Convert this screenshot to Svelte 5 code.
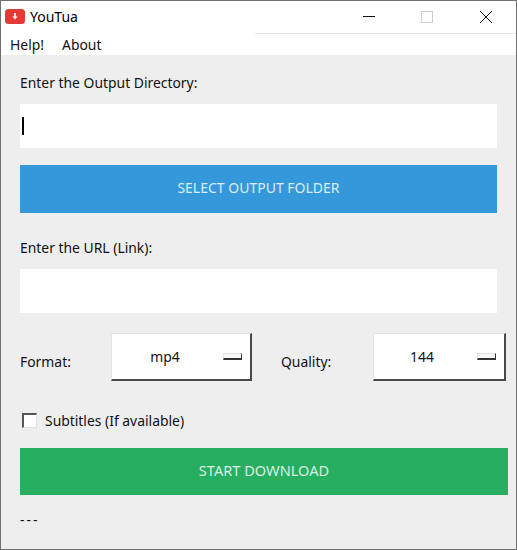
<script lang="ts">
    let outputDir = '';
    let url = '';
    let format = 'mp4';
    let quality = '144';
</script>

<main class="window">
    <header class="titlebar">
        <svg class="app-icon" width="20" height="15" viewBox="0 0 20 15">
            <rect width="20" height="15" rx="3.500" fill="#e53935" />
            <path d="M9 4h2v3.500h1.800L10 10.500 7.200 7.500H9z" fill="#fbe9e7" />
        </svg>
        <span class="app-title">YouTua</span>
        <div class="win-controls">
            <svg width="14" height="14" viewBox="0 0 14 14"><path d="M2 6.500h12" stroke="#111" fill="none" /></svg>
            <svg width="14" height="14" viewBox="0 0 14 14"><rect x="1.500" y="1.500" width="11" height="11" stroke="#ccc" fill="none" /></svg>
            <svg width="14" height="14" viewBox="0 0 14 14"><path d="M1 1l12 12M13 1L1 13" stroke="#111" fill="none" /></svg>
        </div>
    </header>

    <nav class="menubar">
        <span>Help!</span>
        <span>About</span>
    </nav>

    <section class="content">
        <div class="label first">Enter the Output Directory:</div>
        <div class="entry"><span class="caret"></span>{outputDir}</div>
        <button class="btn blue">SELECT OUTPUT FOLDER</button>

        <div class="label second">Enter the URL (Link):</div>
        <div class="entry">{url}</div>

        <div class="options">
            <span class="opt-label format">Format:</span>
            <div class="optionmenu format-menu">
                <span>{format}</span>
                <i class="indicator"></i>
            </div>
            <span class="opt-label quality">Quality:</span>
            <div class="optionmenu quality-menu">
                <span>{quality}</span>
                <i class="indicator"></i>
            </div>
        </div>

        <label class="check">
            <span class="box"></span>
            Subtitles (If available)
        </label>

        <button class="btn green">START DOWNLOAD</button>
        <div class="status">---</div>
    </section>
</main>

<style>
    :global(body) {
        margin: 0;
        background: #eeeeee;
    }

    .window {
        box-sizing: border-box;
        width: 517px;
        height: 550px;
        display: flex;
        flex-direction: column;
        border: 1px solid #707070;
        font-family: "Noto Sans", "Open Sans", sans-serif;
        font-size: 13.9px;
        color: #111;
        background: #eeeeee;
        overflow: hidden;
    }

    .titlebar {
        height: 32px;
        display: flex;
        align-items: center;
        background: #fff;
        padding-left: 4px;
        padding-bottom: 2px;
        box-sizing: border-box;
        flex: none;
    }

    .app-icon {
        margin-right: 5px;
    }

    .app-title {
        font-size: 14px;
        color: #000;
    }

    .win-controls {
        margin-left: auto;
        display: flex;
        gap: 45px;
        padding-top: 2px;
        padding-right: 23px;
    }

    .win-controls svg {
        display: block;
    }

    .menubar {
        height: 22px;
        flex: none;
        display: flex;
        align-items: center;
        gap: 18px;
        padding-left: 9px;
        background: #fff;
        position: relative;
    }

    /* thin line under the caption buttons, only on the right part */
    .menubar::before {
        content: "";
        position: absolute;
        left: 254px;
        right: 0;
        top: 0;
        height: 1px;
        background: #e4e4e4;
    }

    .content {
        flex: 1;
        padding: 0 0 0 19px;
    }

    .label {
        height: 20px;
        line-height: 20px;
    }

    .label.first {
        margin-top: 18px;
        margin-bottom: 11px;
    }

    .label.second {
        margin-top: 25px;
        margin-bottom: 11px;
    }

    .entry {
        width: 477px;
        height: 44px;
        background: #fff;
        display: flex;
        align-items: center;
    }

    .caret {
        width: 2px;
        height: 18px;
        margin-left: 2px;
        background: #000;
    }

    .btn {
        display: block;
        border: none;
        margin: 0;
        padding: 0;
        font: inherit;
    }

    .blue {
        width: 477px;
        height: 48px;
        margin-top: 17px;
        padding-bottom: 3px;
        background: #3498db;
        color: #dcecf8;
        font-size: 14px;
    }

    .green {
        width: 488px;
        height: 47px;
        margin-top: 18px;
        padding-bottom: 4px;
        background: #27ae60;
        color: #d6f0e4;
        font-size: 14.6px;
    }

    .options {
        display: flex;
        align-items: center;
        height: 48px;
        margin-top: 20px;
    }

    .opt-label {
        position: relative;
        top: 4px;
    }

    .format {
        width: 91px;
    }

    .quality {
        width: 92px;
    }

    .format-menu {
        width: 141px;
        margin-right: 29px;
        padding-right: 32px;
    }

    .quality-menu {
        width: 133px;
        padding-right: 34px;
    }

    .optionmenu {
        box-sizing: border-box;
        height: 48px;
        background: #fff;
        border-top: 1px solid #e4e4e4;
        border-left: 1px solid #e4e4e4;
        border-right: 2px solid #4a4a4a;
        border-bottom: 2px solid #4a4a4a;
        display: flex;
        align-items: center;
        justify-content: center;
        position: relative;
    }

    .indicator {
        position: absolute;
        right: 8px;
        top: 19px;
        box-sizing: border-box;
        width: 19px;
        height: 7px;
        background: #f8f8f8;
        border-top: 1px solid #e4e4e4;
        border-left: 1px solid #e4e4e4;
        border-right: 1px solid #333;
        border-bottom: 2px solid #333;
    }

    .check {
        display: flex;
        align-items: center;
        height: 20px;
        margin-top: 29px;
        padding-left: 2px;
    }

    .box {
        box-sizing: border-box;
        width: 15px;
        height: 15px;
        margin-right: 8px;
        background: #fff;
        border-top: 2px solid #555;
        border-left: 2px solid #555;
        border-right: 1px solid #e0e0e0;
        border-bottom: 1px solid #e0e0e0;
    }

    .status {
        margin-top: 15px;
        height: 20px;
        line-height: 20px;
        letter-spacing: 2px;
    }
</style>
